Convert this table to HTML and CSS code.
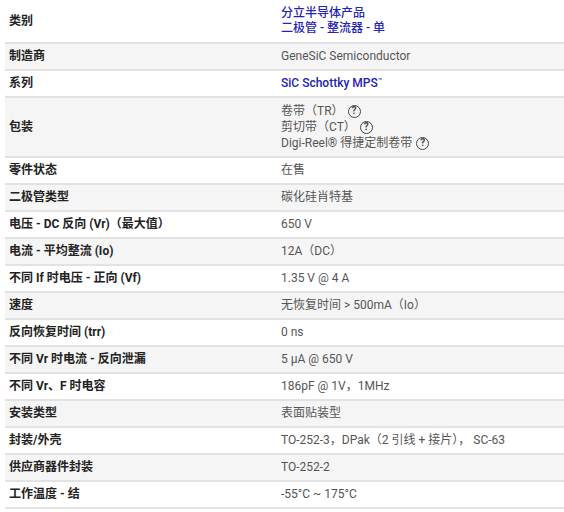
FILE: index.html
```html
<!DOCTYPE html>
<html lang="zh-CN">
<head>
<meta charset="utf-8">
<link rel="stylesheet" href="styles.css">
</head>
<body>
<div class="wrap">
<table class="specs">
<tbody>
<tr><td class="lbl">类别</td><td class="val"><a class="lnk" href="#">分立半导体产品</a><br><a class="lnk" href="#">二极管 - 整流器 - 单</a></td></tr>
<tr class="alt"><td class="lbl">制造商</td><td class="val">GeneSiC Semiconductor</td></tr>
<tr><td class="lbl">系列</td><td class="val"><a class="lnk" href="#">SiC Schottky MPS<sup class="tm">™</sup></a></td></tr>
<tr class="alt pk"><td class="lbl">包装</td><td class="val">
<div class="pline">卷带（TR）<span class="q">?</span></div>
<div class="pline">剪切带（CT）<span class="q">?</span></div>
<div class="pline">Digi-Reel® 得捷定制卷带<span class="q">?</span></div>
</td></tr>
<tr><td class="lbl">零件状态</td><td class="val">在售</td></tr>
<tr class="alt"><td class="lbl">二极管类型</td><td class="val">碳化硅肖特基</td></tr>
<tr><td class="lbl">电压 - DC 反向 (Vr)（最大值）</td><td class="val">650 V</td></tr>
<tr class="alt"><td class="lbl">电流 - 平均整流 (Io)</td><td class="val">12A（DC）</td></tr>
<tr><td class="lbl">不同 If 时电压 - 正向 (Vf)</td><td class="val">1.35 V @ 4 A</td></tr>
<tr class="alt"><td class="lbl">速度</td><td class="val">无恢复时间 &gt; 500mA（Io）</td></tr>
<tr><td class="lbl">反向恢复时间 (trr)</td><td class="val">0 ns</td></tr>
<tr class="alt"><td class="lbl">不同 Vr 时电流 - 反向泄漏</td><td class="val">5 µA @ 650 V</td></tr>
<tr><td class="lbl">不同 Vr、F 时电容</td><td class="val">186pF @ 1V，1MHz</td></tr>
<tr class="alt"><td class="lbl">安装类型</td><td class="val">表面贴装型</td></tr>
<tr><td class="lbl">封装/外壳</td><td class="val">TO-252-3，DPak（2 引线 + 接片）， SC-63</td></tr>
<tr class="alt"><td class="lbl">供应商器件封装</td><td class="val">TO-252-2</td></tr>
<tr class="last"><td class="lbl">工作温度 - 结</td><td class="val">-55°C ~ 175°C</td></tr>
</tbody>
</table>
</div>
</body>
</html>
```
FILE: styles.css
```css
html, body {
  margin: 0;
  padding: 0;
  background: #fff;
}
.wrap {
  padding-left: 5px;
}
.specs {
  width: 559px;
  border-collapse: collapse;
  font-family: Roboto, "Noto Sans CJK SC", sans-serif;
  font-size: 12px;
  line-height: 15px;
}
.specs td {
  padding: 5px 4px 5px 4px;
  border-bottom: 2px solid #e2e2e2;
  vertical-align: middle;
}
.specs tr:first-child td {
  padding-top: 6px;
  padding-bottom: 6px;
}
.alt td {
  background: #f5f5f5;
}
.lbl {
  width: 264px;
  font-weight: bold;
  color: #222;
}
.val {
  color: #555;
}
.lnk {
  color: #2323b5;
  text-decoration: none;
  font-weight: 500;
}
.tm {
  font-size: 7px;
  vertical-align: top;
  line-height: 8px;
  position: relative;
  top: 1px;
}
.pline {
  line-height: 16px;
  display: flex;
  align-items: center;
}
.q {
  display: inline-flex;
  align-items: center;
  justify-content: center;
  box-sizing: border-box;
  width: 13px;
  height: 13px;
  border: 1.5px solid #444;
  border-radius: 50%;
  color: #444;
  font-size: 10px;
  font-weight: bold;
  line-height: 10px;
  margin-left: 4px;
}
```
